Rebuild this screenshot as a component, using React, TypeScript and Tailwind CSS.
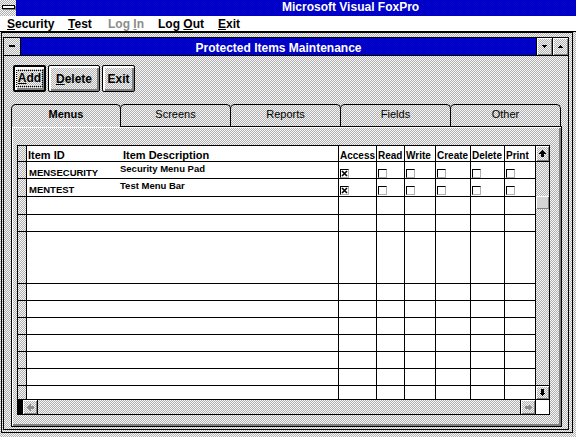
import React from 'react';

const DITHER =
  'bg-[image:repeating-conic-gradient(#b0b0b0_0_25%,#f6f6f6_0_50%)] bg-[length:2px_2px] bg-fixed';
const BLUE =
  'bg-[image:repeating-conic-gradient(#00009c_0_25%,#0000f4_0_50%)] bg-[length:2px_2px] bg-fixed';
const BEVEL = 'shadow-[inset_1px_1px_0_#fff,inset_-1px_-1px_0_#808080]';

type Dir = 'up' | 'down' | 'left' | 'right';

const ROTATE: Record<Dir, string> = {
  up: '',
  right: 'rotate-90',
  down: 'rotate-180',
  left: '-rotate-90',
};

function Arrow({ dir, dim }: { dir: Dir; dim?: boolean }) {
  return (
    <svg width="7" height="7" viewBox="0 0 7 7" shapeRendering="crispEdges" className={ROTATE[dir]}>
      <path d="M3.5 0L7 3.5H5V7H2V3.5H0Z" className={dim ? 'fill-[#8c8c8c]' : 'fill-black'} />
    </svg>
  );
}

type Perm = { label: string; width: string };

const PERMS: Perm[] = [
  { label: 'Access', width: 'w-[38px]' },
  { label: 'Read', width: 'w-[28px]' },
  { label: 'Write', width: 'w-[31px]' },
  { label: 'Create', width: 'w-[35px]' },
  { label: 'Delete', width: 'w-[34px]' },
  { label: 'Print', width: 'w-[31px]' },
];

type Row = {
  id?: string;
  desc?: string;
  perms?: boolean[];
  height: string;
  line: boolean;
};

const ROWS: Row[] = [
  {
    id: 'MENSECURITY',
    desc: 'Security Menu Pad',
    perms: [true, false, false, false, false, false],
    height: 'h-[17px]',
    line: true,
  },
  {
    id: 'MENTEST',
    desc: 'Test Menu Bar',
    perms: [true, false, false, false, false, false],
    height: 'h-[18px]',
    line: true,
  },
  { height: 'h-[18px]', line: true },
  { height: 'h-[17px]', line: true },
  { height: 'h-[17px]', line: false },
  { height: 'h-[17px]', line: false },
  { height: 'h-[18px]', line: true },
  { height: 'h-[17px]', line: true },
  { height: 'h-[17px]', line: true },
  { height: 'h-[17px]', line: true },
  { height: 'h-[17px]', line: true },
  { height: 'h-[17px]', line: true },
  { height: 'h-[17px]', line: true },
  { height: 'h-[13px]', line: false },
];

const TABS = ['Menus', 'Screens', 'Reports', 'Fields', 'Other'];

function CheckBox({ checked }: { checked: boolean }) {
  return (
    <div className="ml-[1px] mt-[7px] flex h-[9px] w-[9px] items-center justify-center border border-black border-b-[#b0b0b0] border-r-[#b0b0b0] bg-white">
      {checked && (
        <svg width="7" height="7" viewBox="0 0 7 7">
          <path d="M1 1L6 6M6 1L1 6" stroke="#000" strokeWidth="1.6" />
        </svg>
      )}
    </div>
  );
}

function PushButton({
  width,
  isDefault,
  children,
}: {
  width: string;
  isDefault?: boolean;
  children: React.ReactNode;
}) {
  return (
    <div
      className={`${DITHER} ${width} ${isDefault ? 'border-2' : 'border'} flex h-[27px] items-center justify-center rounded-[2px] border-black text-[12px] font-bold leading-[12px] shadow-[inset_2px_2px_0_#fff,inset_-2px_-2px_0_#808080]`}
    >
      {isDefault ? (
        <span className="inline-block border border-dotted border-black px-[1px] pb-[2px] pt-[1px]">{children}</span>
      ) : (
        children
      )}
    </div>
  );
}

function Grid() {
  return (
    <div className="flex h-[270px] w-[533px] flex-col border border-black bg-white">
      <div className="flex h-[253px]">
        <div className="flex w-[518px] flex-col">
          {/* header */}
          <div className="flex h-[16px] border-b border-black font-bold">
            <div className={`${DITHER} w-[9px] border-r border-black`} />
            <div className="w-[93px] pl-[1px] pt-[4px] text-[11px] leading-[11px]">Item ID</div>
            <div className="w-[219px] border-r border-black pl-[3px] pt-[4px] text-[11px] leading-[11px]">
              Item Description
            </div>
            {PERMS.map((p) => (
              <div
                key={p.label}
                className={`${p.width} overflow-hidden whitespace-nowrap border-r border-black pl-[1px] pt-[5px] text-[10px] leading-[10px]`}
              >
                {p.label}
              </div>
            ))}
          </div>

          {ROWS.map((row, i) => (
            <div key={i} className={`flex ${row.height} ${row.line ? 'border-b border-black' : ''}`}>
              <div className={`${DITHER} w-[9px] border-r border-black`} />
              <div className="w-[93px] whitespace-nowrap pl-[2px] pt-[6px] text-[9.5px] font-bold leading-[10px]">
                {row.id}
              </div>
              <div className="w-[219px] whitespace-nowrap border-r border-black pt-[2px] text-[9.5px] font-bold leading-[10px]">
                {row.desc}
              </div>
              {PERMS.map((p, j) => (
                <div key={p.label} className={`${p.width} border-r border-black`}>
                  {row.perms && <CheckBox checked={row.perms[j]} />}
                </div>
              ))}
            </div>
          ))}
        </div>

        {/* vertical scroll bar */}
        <div className="flex w-[13px] flex-col">
          <div className={`${DITHER} ${BEVEL} flex h-[16px] items-center justify-center border-b border-black`}>
            <Arrow dir="up" />
          </div>
          <div className={`${DITHER} flex-1 pt-[34px]`}>
            <div className={`h-[13px] bg-[#d4d4d4] ${BEVEL}`} />
          </div>
          <div className={`${DITHER} ${BEVEL} flex h-[14px] items-center justify-center border-t border-black`}>
            <Arrow dir="down" />
          </div>
        </div>
      </div>

      {/* horizontal scroll bar */}
      <div className="flex h-[15px] border-t border-black">
        <div className="w-[5px] bg-black" />
        <div className={`${DITHER} ${BEVEL} flex w-[15px] items-center justify-center border-r border-black`}>
          <Arrow dir="left" dim />
        </div>
        <div className={`${DITHER} flex-1`} />
        <div className={`${DITHER} ${BEVEL} flex w-[15px] items-center justify-center border-l border-black`}>
          <Arrow dir="right" dim />
        </div>
        <div className="w-[14px] border-l border-black bg-white" />
      </div>
    </div>
  );
}

export default function App() {
  return (
    <div className="flex h-[437px] w-[576px] flex-col overflow-hidden bg-white font-['Liberation_Sans',Arial,sans-serif] text-black">
      {/* application caption */}
      <div className="flex h-[16px] shrink-0">
        <div className={`${DITHER} flex w-[16px] justify-center pt-[5px]`}>
          <div className="h-[4px] w-[13px] border border-black bg-white shadow-[1px_1px_0_#808080]" />
        </div>
        <div className={`${BLUE} flex-1 pl-[266px] pt-[1px] text-[12px] font-bold leading-[12px] text-white`}>
          Microsoft Visual FoxPro
        </div>
      </div>

      {/* menu bar */}
      <div className="flex h-[16px] shrink-0 border-b border-black bg-white pl-[7px] pt-[2px] text-[12px] font-bold leading-[12px]">
        <span className="w-[61px]">
          <u>S</u>ecurity
        </span>
        <span className="w-[40px]">
          <u>T</u>est
        </span>
        <span className="w-[50px] text-[#8c8c8c]">
          Log <u>I</u>n
        </span>
        <span className="w-[60px]">
          Log <u>O</u>ut
        </span>
        <span>
          <u>E</u>xit
        </span>
      </div>

      {/* desktop */}
      <div className={`${DITHER} flex-1`}>
        <div className={`${DITHER} ml-[1px] h-[401px] w-[572px] border border-black pb-[2px] pl-[1px] pr-[3px] pt-[4px]`}>
          <div className="flex h-full flex-col border border-black">
            {/* document caption */}
            <div className="flex h-[18px] shrink-0 border-b border-black">
              <div className={`${DITHER} flex w-[17px] justify-center border-r border-black pt-[7px]`}>
                <div className="h-[2px] w-[6px] bg-black" />
              </div>
              <div className={`${BLUE} flex-1 pt-[4px] text-center text-[12px] font-bold leading-[12px] text-white`}>
                Protected Items Maintenance
              </div>
              <div className={`${DITHER} ${BEVEL} flex w-[16px] items-center justify-center border-l border-black`}>
                <svg width="5" height="3" viewBox="0 0 5 3" shapeRendering="crispEdges">
                  <path d="M0 0H5L2.5 3Z" fill="#000" />
                </svg>
              </div>
              <div className={`${DITHER} ${BEVEL} flex w-[16px] items-center justify-center border-l border-black`}>
                <svg width="5" height="3" viewBox="0 0 5 3" shapeRendering="crispEdges">
                  <path d="M0 3H5L2.5 0Z" fill="#000" />
                </svg>
              </div>
            </div>

            {/* client area */}
            <div className={`${DITHER} flex flex-1 flex-col`}>
              <div className="ml-[9px] mt-[9px] flex h-[27px] gap-[2px]">
                <PushButton width="w-[33px]" isDefault>
                  <u>A</u>dd
                </PushButton>
                <PushButton width="w-[52px]">
                  <u>D</u>elete
                </PushButton>
                <PushButton width="w-[33px]">Exit</PushButton>
              </div>

              <div className="ml-[7px] mt-[12px] flex h-[22px] items-start">
                {TABS.map((t, i) => (
                  <div
                    key={t}
                    className={`${DITHER} ${i === 0 ? 'relative z-10 h-[23px] w-[110px] font-bold' : '-ml-[1px] h-[22px] w-[111px]'} rounded-t-[5px] border-l border-r border-t border-black pt-[4px] text-center text-[11px] leading-[11px]`}
                  >
                    {t}
                  </div>
                ))}
              </div>

              <div className="ml-[7px] h-[301px] w-[551px] border border-black pl-[5px] pt-[18px] shadow-[inset_1px_1px_0_#fff,inset_-2px_-2px_0_#808080]">
                <Grid />
              </div>
            </div>
          </div>
        </div>
      </div>
    </div>
  );
}
